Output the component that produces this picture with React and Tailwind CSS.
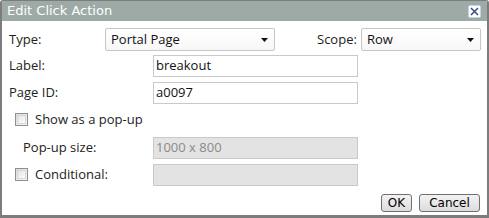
import React from "react";

function Select({ value, className }) {
  return (
    <div
      className={
        "flex h-[23px] items-center justify-between rounded-[2px] border border-[#c6c6c6] bg-gradient-to-b from-white to-[#f7f7f7] pl-[5px] pr-[6px] text-[13px] text-[#111]" +
        " " +
        className
      }
    >
      <span>{value}</span>
      <svg width="7" height="4" viewBox="0 0 7 4">
        <path d="M0 0h7L3.5 4z" fill="#111" />
      </svg>
    </div>
  );
}

function Input({ value, disabled, placeholder }) {
  return (
    <div
      className={
        disabled
          ? "flex h-[22px] w-[205px] items-center border border-[#c9c9c9] bg-[#e3e3e3] px-[2px] text-[13px] text-[#8a8a8a]"
          : "flex h-[22px] w-[205px] items-center border border-[#c9c9c9] bg-white px-[2px] text-[13px] text-[#111]"
      }
    >
      {value || placeholder}
    </div>
  );
}

function Checkbox() {
  return (
    <div className="h-[13px] w-[13px] shrink-0 border border-[#8f8f8f] bg-gradient-to-br from-[#dcdcdc] to-[#f8f8f8] p-[1px]">
      <div className="h-full w-full border border-[#d6d6d6] bg-gradient-to-br from-[#e2e2e2] to-white" />
    </div>
  );
}

export default function App() {
  return (
    <div
      className="flex h-[218px] w-[489px] flex-col overflow-hidden rounded-t-[3px] border-x-2 border-t border-b-[3px] border-[#7c7c7c] bg-white"
      style={{ fontFamily: '"Open Sans", "Noto Sans", sans-serif' }}
    >
      <div className="flex h-[20px] shrink-0 items-center justify-between bg-[#9eaaa6] pl-[5px] pr-[6px]">
        <span
          className="text-[13px] text-white"
          style={{ fontFamily: '"DejaVu Sans", Verdana, sans-serif' }}
        >
          Edit Click Action
        </span>
        <div className="flex h-[13px] w-[13px] items-center justify-center rounded-[2px] border border-[#c5d3e6] bg-white">
          <svg width="9" height="9" viewBox="0 0 9 9">
            <path d="M1 1L8 8M8 1L1 8" stroke="#3a4f8c" strokeWidth="1.6" />
          </svg>
        </div>
      </div>

      <div className="flex flex-1 flex-col pl-[7px] pr-[6px] pt-[7px] text-[13px] text-[#222]">
        <div className="flex items-center">
          <span className="w-[96px]">Type:</span>
          <Select value="Portal Page" className="w-[170px]" />
          <span className="ml-[42px] w-[44px]">Scope:</span>
          <Select value="Row" className="w-[120px]" />
        </div>

        <div className="mt-[4px] flex items-center">
          <span className="w-[144px]">Label:</span>
          <Input value="breakout" />
        </div>

        <div className="mt-[5px] flex items-center">
          <span className="w-[144px]">Page ID:</span>
          <Input value="a0097" />
        </div>

        <div className="mt-[6px] flex items-center pl-[6px]">
          <Checkbox />
          <span className="ml-[7px]">Show as a pop-up</span>
        </div>

        <div className="mt-[7px] flex items-center">
          <span className="w-[144px] pl-[14px]">Pop-up size:</span>
          <Input value="1000 x 800" disabled />
        </div>

        <div className="mt-[5px] flex items-center">
          <div className="flex w-[144px] items-center pl-[6px]">
            <Checkbox />
            <span className="ml-[7px]">Conditional:</span>
          </div>
          <Input value="" disabled />
        </div>

        <div
          className="mt-[8px] flex justify-end gap-[7px] pr-[1px] text-[12px] text-black"
          style={{ fontFamily: '"DejaVu Sans", Verdana, sans-serif' }}
        >
          <button className="flex h-[18px] w-[31px] shrink-0 items-center justify-center rounded-[3px] border border-[#707070] bg-gradient-to-b from-[#f3f3f3] to-[#dcdcdc] px-0">
            OK
          </button>
          <button className="flex h-[18px] w-[61px] shrink-0 items-center justify-center rounded-[3px] border border-[#707070] bg-gradient-to-b from-[#f3f3f3] to-[#dcdcdc] px-0">
            Cancel
          </button>
        </div>
      </div>
    </div>
  );
}
